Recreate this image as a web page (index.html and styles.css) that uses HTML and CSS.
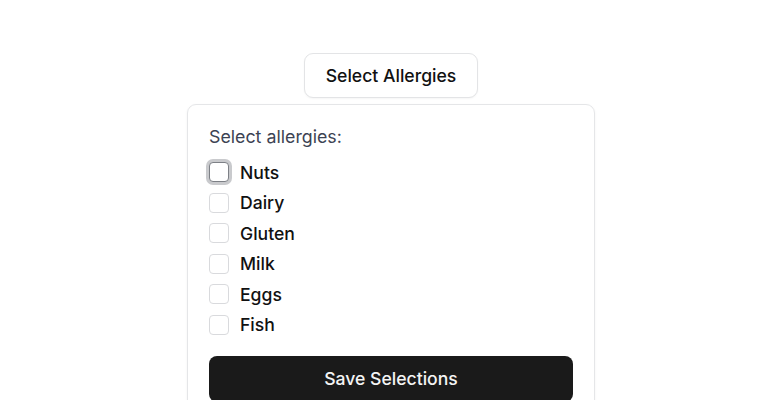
FILE: index.html
```html
<!DOCTYPE html>
<html>
<head>
<meta charset="utf-8">
<link rel="stylesheet" href="styles.css">
</head>
<body>
<div class="page">
  <button class="trigger">Select Allergies</button>
  <div class="card">
    <div class="title">Select allergies:</div>
    <ul class="list">
      <li class="row"><span class="box focus"></span><span class="label">Nuts</span></li>
      <li class="row"><span class="box"></span><span class="label">Dairy</span></li>
      <li class="row"><span class="box"></span><span class="label">Gluten</span></li>
      <li class="row"><span class="box"></span><span class="label">Milk</span></li>
      <li class="row"><span class="box"></span><span class="label">Eggs</span></li>
      <li class="row"><span class="box"></span><span class="label">Fish</span></li>
    </ul>
    <button class="save">Save Selections</button>
  </div>
</div>
</body>
</html>
```

FILE: styles.css
```css
html, body {
  margin: 0;
  padding: 0;
  background: #ffffff;
  font-family: Inter, "Liberation Sans", sans-serif;
  overflow: hidden;
}
.page {
  display: flex;
  flex-direction: column;
  align-items: center;
  padding-top: 53px;
  padding-left: 12px;
}
.trigger {
  height: 45px;
  width: 174px;
  background: #fff;
  border: 1px solid #e3e4e6;
  border-radius: 9px;
  font-family: inherit;
  font-size: 17.6px;
  font-weight: 500;
  color: #111;
  box-shadow: 0 1px 2px rgba(0,0,0,0.04);
  padding: 0;
}
.card {
  margin-top: 6px;
  width: 408px;
  box-sizing: border-box;
  border: 1px solid #e5e6e8;
  border-radius: 9px;
  padding: 20px 21px;
  box-shadow: 0 1px 3px rgba(0,0,0,0.05);
}
.title {
  font-size: 17.8px;
  line-height: 24px;
  color: #3c4353;
}
.list {
  list-style: none;
  margin: 11px 0 0 0;
  padding: 0;
  display: flex;
  flex-direction: column;
  gap: 6.6px;
}
.row {
  display: flex;
  align-items: center;
  height: 24px;
  gap: 11px;
}
.box {
  width: 18px;
  height: 18px;
  border: 1px solid #d9dadd;
  border-radius: 4px;
  background: #fff;
  box-sizing: content-box;
}
.box.focus {
  border-color: #7d8086;
  box-shadow: 0 0 0 3px #c9cacd;
  border-radius: 4px;
}
.label {
  font-size: 17.6px;
  font-weight: 500;
  color: #111;
}
.save {
  margin-top: 19px;
  width: 100%;
  height: 46px;
  background: #1a1a1a;
  color: #f4f4f4;
  border: none;
  border-radius: 8px;
  font-family: inherit;
  font-size: 17.6px;
  font-weight: 500;
  padding: 0;
}
```
